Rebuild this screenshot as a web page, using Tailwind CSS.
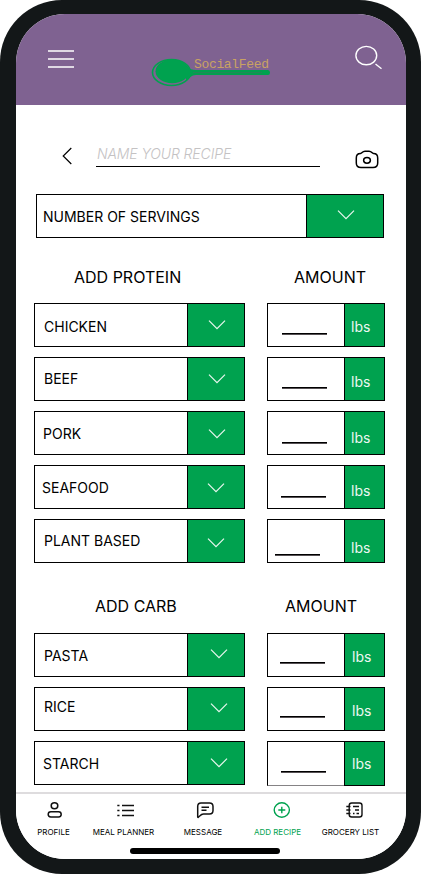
<!DOCTYPE html>
<html lang="en">
<head>
<meta charset="utf-8">
<title>Add recipe</title>
<script src="https://cdn.jsdelivr.net/npm/@tailwindcss/browser@4"></script>
</head>
<body class="bg-white">
<div class="w-[421px] h-[874px] bg-[#131718] rounded-[62px] pt-[14px] pl-4 pr-[15px] pb-[15px] overflow-hidden font-['Inter',sans-serif] font-[370] text-black">
<div class="h-[845px] w-[390px] rounded-[49px] bg-white overflow-hidden flex flex-col">

  <header class="h-[91px] shrink-0 bg-[#7f6291] flex items-start">
    <svg class="ml-8 mt-[35px]" width="26" height="20" fill="none" stroke="#dfd8e3" stroke-width="2"><path d="M0 2H26M0 10H26M0 18H26"/></svg>
    <svg class="ml-[77px] mt-[41px]" width="122" height="34" viewBox="151 55 122 34">
      <ellipse cx="171.500" cy="72.500" rx="19" ry="13" fill="none" stroke="#00a24f" stroke-width="1.600"/>
      <ellipse cx="172.300" cy="71.300" rx="16.800" ry="11.900" fill="#00a24f"/>
      <path d="M186 66C190 69 192 70 196 70H268Q270 70 270 72.500T268 75H196C191 75 191 78 186 80Z" fill="#00a24f"/>
      <path d="M193 72.600H262" stroke="#35795f" stroke-width=".7"/>
      <text x="194" y="67.700" font-family="Liberation Mono, monospace" font-size="13" font-weight="400" textLength="75" fill="#c9a263">SocialFeed</text>
    </svg>
    <svg class="ml-[82px] mt-[31px]" width="28" height="26" viewBox="355 45 28 26" fill="none" stroke="#fff" stroke-width="1.400"><ellipse cx="366.300" cy="55.600" rx="10.400" ry="9.200"/><path d="M375.500 64L381.500 68.800"/></svg>
  </header>

  <main class="flex-1 min-h-0 overflow-hidden">
    <div class="flex items-start pt-[37px] h-[89px]">
      <svg class="ml-[45px] mt-[5px]" width="12" height="18" viewBox="61 147 12 18" fill="none" stroke="#000" stroke-width="1.200"><path d="M71.300 148L63.200 156L71.300 164"/></svg>
      <div class="ml-[23px] w-[224px] h-[25px] border-b border-black text-[14px] leading-5 italic font-light tracking-[-0.1px] text-[#c4c2c3] pl-px pt-[2px] whitespace-nowrap">NAME YOUR RECIPE</div>
      <svg class="ml-[35px] mt-[7px]" width="25" height="20" viewBox="355 149 25 20" fill="none" stroke="#000" stroke-width="1.500"><path d="M360.500 153.500C362.300 153.500 362 151.300 365 151.300H369C372 151.300 371.700 153.500 373.500 153.500C376.500 153.500 377.700 155.500 377.700 158V163C377.700 166 376 167.500 373 167.500H361C358 167.500 356.300 166 356.300 163V158C356.300 155.500 357.500 153.500 360.500 153.500Z"/><ellipse cx="367" cy="160.300" rx="3.400" ry="2.900"/></svg>
    </div>

    <div class="ml-5 w-[348px] h-11 border border-black flex">
      <div class="w-[269px] pl-[6px] pt-3 text-[14px] leading-5">NUMBER OF SERVINGS</div>
      <div class="flex-1 border-l border-black bg-[#00a24f] pl-[30px] pt-[15px]"><svg width="18" height="10" fill="none" stroke="#e9f7ef" stroke-width="1.200"><path d="M1 .7L9 8.700L17 .7"/></svg></div>
    </div>

    <div class="flex h-[65px] pt-[27px] text-[16px] leading-6"><h2 class="ml-[58px] w-[220px] font-[370]">ADD PROTEIN</h2><h2 class="font-[370]">AMOUNT</h2></div>
    <div id="protein" class="flex flex-col gap-[10px]"></div>
    <div class="flex h-[70px] pt-[31px] text-[16px] leading-6"><h2 class="ml-[79px] w-[190px] font-[370]">ADD CARB</h2><h2 class="font-[370]">AMOUNT</h2></div>
    <div id="carb" class="flex flex-col gap-[10px]"></div>
  </main>

  <nav class="h-[67px] shrink-0 border-t-2 border-[#dedcde] bg-white text-[8px] leading-[10px] flex flex-col">
    <div class="flex h-[54px] pt-[7px]">
      <div class="w-[75px] flex flex-col items-center gap-[8px]"><svg class="translate-x-[0.5px]" width="20" height="18" viewBox="44 801 20 18" fill="none" stroke="#111" stroke-width="1.500"><ellipse cx="54" cy="805.700" rx="3.300" ry="3"/><rect x="47.700" y="811.700" width="13" height="5.300" rx="2.650"/></svg><span>PROFILE</span></div>
      <div class="w-[65px] flex flex-col items-center gap-[8px]"><svg class="translate-x-[2px]" width="20" height="18" viewBox="116 801 20 18" fill="none" stroke="#111" stroke-width="1.500"><path d="M122 805.500H134M122 810.500H134M122 815.500H134"/><path d="M117.300 805.500H119.500M117.300 810.500H119.500M117.300 815.500H119.500"/></svg><span class="whitespace-nowrap">MEAL PLANNER</span></div>
      <div class="w-[94px] flex flex-col items-center gap-[8px]"><svg class="translate-x-[3px]" width="20" height="18" viewBox="196 801 20 18" fill="none" stroke="#111" stroke-width="1.500" stroke-linejoin="round"><path d="M201 803H209.500Q213 803 213 806.500V810.500Q213 814 209.500 814H203.500Q201.500 814 200 815.800L198.300 817.300Q197.700 817.600 197.700 816.700V806.500Q197.700 803 201 803Z"/><path d="M201.500 807.300H209M201.500 810.300H206.500"/></svg><span>MESSAGE</span></div>
      <div class="w-[55px] flex flex-col items-center gap-[8px] text-[#00a24f]"><svg class="translate-x-1" width="20" height="18" viewBox="272 801 20 18" fill="none" stroke="#00a24f" stroke-width="1.400"><ellipse cx="281.800" cy="810" rx="7.600" ry="7.200"/><path d="M278.300 810H285.300M281.800 806.700V813.300"/></svg><span class="whitespace-nowrap">ADD RECIPE</span></div>
      <div class="w-[91px] flex flex-col items-center gap-[8px]"><svg class="translate-x-[4.5px]" width="20" height="18" viewBox="345 801 20 18" fill="none" stroke="#111" stroke-width="1.400"><rect x="348.700" y="803" width="12.800" height="14" rx="2.500"/><path d="M345.800 806.500H350M345.800 810H350M345.800 813.500H350M352.500 806.500H358.500M354.500 810H358.500M352.500 813.500H354M356 813.500H358.500"/></svg><span class="whitespace-nowrap">GROCERY LIST</span></div>
    </div>
    <div class="ml-[114px] w-[150px] h-[6px] rounded-full bg-black"></div>
  </nav>
</div>
</div>
<script>
// name, name x/y padding, chevron x/y padding, line x/y padding, unit x/y padding
const protein = [
  ["CHICKEN", 9, 13, 20, 16, 14, 29, 6, 13],
  ["BEEF", 9, 11, 20, 16, 14, 29, 6, 14],
  ["PORK", 8, 12, 20, 17, 14, 30, 6, 16],
  ["SEAFOOD", 7, 12, 19, 17, 13, 30, 6, 15],
  ["PLANT BASED", 9, 11, 19, 18, 7, 34, 6, 18],
];
const carb = [
  ["PASTA", 9, 12, 22, 15, 12, 28, 7, 13],
  ["RICE", 9, 9, 22, 15, 12, 28, 7, 13],
  ["STARCH", 8, 12, 22, 16, 13, 29, 7, 12],
];
const pad = (x, y) => `style="padding-left:${x}px;padding-top:${y}px"`;
const row = ([name, nx, ny, cx, cy, lx, ly, ux, uy]) => `
  <div class="flex pl-[18px] gap-[22px] ${name === "STARCH" ? "h-[45px]" : "h-11"}">
    <div class="w-[211px] h-11 border border-black flex">
      <div class="w-[152px] text-[14px] leading-5" ${pad(nx, ny)}>${name}</div>
      <div class="flex-1 border-l border-black bg-[#00a24f]" ${pad(cx, cy)}><svg width="18" height="10" fill="none" stroke="#e9f7ef" stroke-width="1.200"><path d="M1 .7L9 8.700L17 .7"/></svg></div>
    </div>
    <div class="w-[118px] flex">
      <div class="w-[77px] border-t border-l border-b border-black ${name === "STARCH" ? "border-b-[#858385]" : ""}" ${pad(lx, ly)}><div class="w-[45px] h-[2px] bg-[#555053] border-t border-black"></div></div>
      <div class="flex-1 border border-black bg-[#00a24f] text-[#edf8f2] text-[14px] leading-5" ${pad(ux, uy)}>lbs</div>
    </div>
  </div>`;
document.getElementById("protein").innerHTML = protein.map(row).join("");
document.getElementById("carb").innerHTML = carb.map(row).join("");
</script>
</body>
</html>
